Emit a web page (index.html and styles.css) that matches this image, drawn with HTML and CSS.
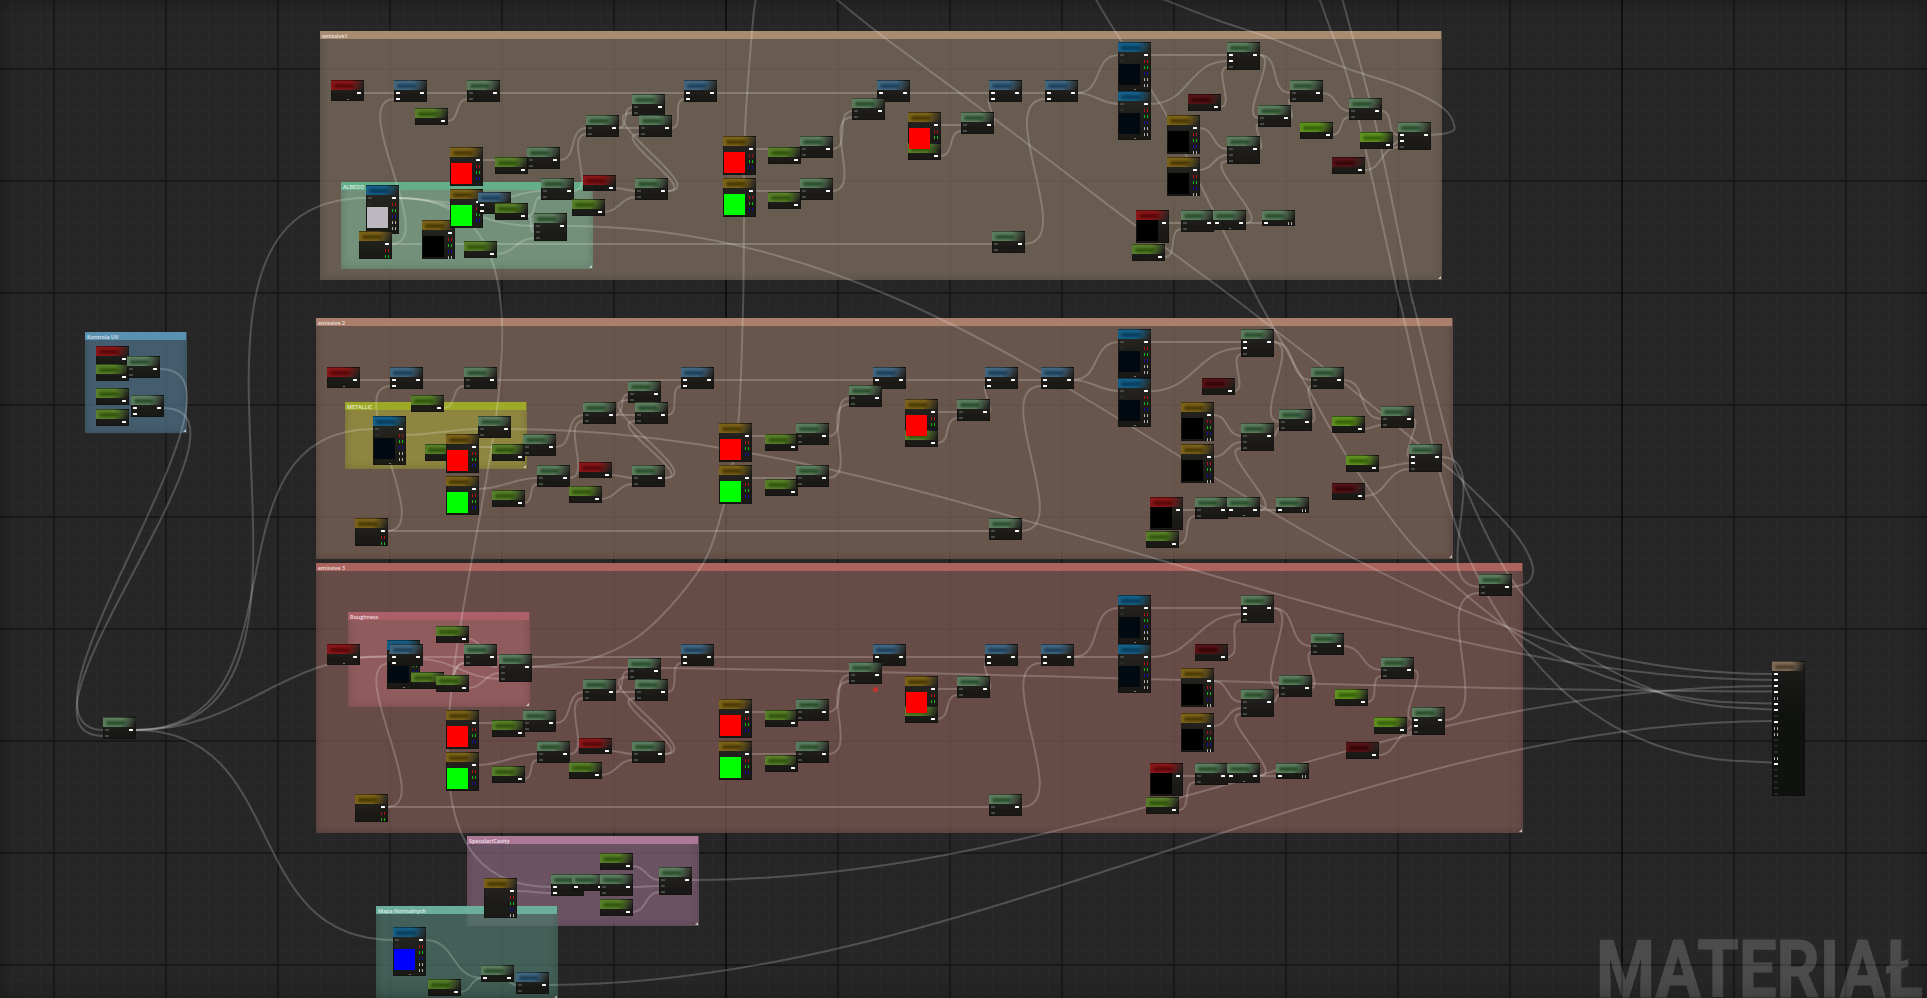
FILE: index.html
```html
<!DOCTYPE html>
<html lang="pl">
<head>
<meta charset="utf-8">
<title>Material graph</title>
<link rel="stylesheet" href="styles.css">
</head>
<body>
<main class="graph" id="graph">
  <section class="comment emissive1"><h2>emissive1</h2></section>
  <section class="comment emissive2"><h2>emissive 2</h2></section>
  <section class="comment emissive3"><h2>emissive 3</h2></section>
  <section class="comment albedo"><h2>ALBEDO</h2></section>
  <section class="comment metallic"><h2>METALLIC</h2></section>
  <section class="comment roughness"><h2>Roughness</h2></section>
  <section class="comment uv"><h2>Kontrola UV</h2></section>
  <section class="comment specular"><h2>Specular/Cavity</h2></section>
  <section class="comment normals"><h2>Mapa Normalnych</h2></section>
  <svg class="wires" id="wires" viewBox="0 0 1927 998"></svg>
  <div class="nodes" id="nodes"></div>
  <i class="marker"></i>
  <svg class="watermark" viewBox="0 0 1927 998"><text x="1596" y="996.5" textLength="327" lengthAdjust="spacingAndGlyphs">MATERIAŁ</text></svg>
</main>
<script src="graph.js"></script>
</body>
</html>
```
FILE: styles.css
```css
* { box-sizing: border-box; }
body { margin: 0; overflow: hidden; background: #262626; font-family: "Open Sans", "Noto Sans", sans-serif; }

.graph {
  position: relative;
  width: 1927px;
  height: 998px;
  overflow: hidden;
  background-color: #262626;
  background-image:
    linear-gradient(90deg, #101010 2px, transparent 2px),
    linear-gradient(90deg, #191919 2px, transparent 2px),
    linear-gradient(#191919 2px, transparent 2px),
    linear-gradient(90deg, #2a2a2a 1px, transparent 1px),
    linear-gradient(#2a2a2a 1px, transparent 1px);
  background-size: 896px 896px, 112px 112px, 112px 112px, 14px 14px, 14px 14px;
  background-position: 725px 0, 53px 0, 0 68px, 54px 0, 0 69px;
  background-repeat: repeat;
}
.graph::after {
  content: "";
  position: absolute;
  inset: 0;
  box-shadow: inset 0 0 22px rgba(0, 0, 0, .3);
  pointer-events: none;
}

.comment {
  position: absolute;
  background: var(--body);
  box-shadow: inset 0 0 9px rgba(0, 0, 0, .2);
}
.comment h2 {
  margin: 0 1px 0 0;
  height: 8px;
  padding-left: 2px;
  background: var(--head);
  color: rgba(255, 255, 255, .8);
  font-size: 5.4px;
  font-weight: 600;
  line-height: 10px;
  white-space: nowrap;
}
.comment::after {
  content: "";
  position: absolute;
  right: 1px;
  bottom: 1px;
  border-left: 3px solid transparent;
  border-bottom: 3px solid rgba(255, 255, 255, .65);
}
.emissive1 { left: 320px; top: 31px; width: 1122px; height: 249px; --head: #a88b71; --body: rgba(132, 115, 98, .7); }
.emissive2 { left: 316px; top: 318px; width: 1137px; height: 241px; --head: #aa806c; --body: rgba(132, 105, 92, .7); }
.emissive3 { left: 316px; top: 563px; width: 1207px; height: 270px; --head: #aa635d; --body: rgba(131, 91, 85, .7); }
.albedo { left: 341px; top: 182px; width: 252px; height: 87px; --head: #65ae8b; --body: rgba(120, 166, 140, .7); }
.metallic { left: 345px; top: 402px; width: 182px; height: 67px; --head: #9da927; --body: rgba(157, 154, 60, .7); }
.roughness { left: 348px; top: 612px; width: 182px; height: 95px; --head: #ad5f68; --body: rgba(163, 98, 103, .7); }
.uv { left: 85px; top: 332px; width: 102px; height: 101px; --head: #5a90b0; --body: rgba(81, 117, 141, .7); }
.specular { left: 467px; top: 836px; width: 232px; height: 90px; --head: #ae7898; --body: rgba(137, 101, 124, .7); }
.normals { left: 376px; top: 906px; width: 182px; height: 93px; --head: #6aae9b; --body: rgba(79, 121, 108, .7); }

.wires, .watermark { position: absolute; inset: 0; width: 100%; height: 100%; }
.wires path { fill: none; stroke: rgba(255, 255, 255, .2); stroke-width: 2; }
.watermark { opacity: .17; }
.watermark text { fill: #fff; stroke: #fff; stroke-width: 1px; font: 700 79px Roboto, "Open Sans", sans-serif; }

.node {
  position: absolute;
  width: 33px;
  background: linear-gradient(rgba(38, 38, 34, .97), rgba(24, 23, 20, .97) 75%);
  box-shadow: inset 0 0 0 1px rgba(10, 10, 10, .35);
}
.node header {
  position: relative;
  height: 10px;
  border-top: 1px solid rgba(0, 0, 0, .4);
  background: linear-gradient(112deg, var(--tone) 55%, transparent 95%);
}
.node header::after {
  content: "";
  position: absolute;
  left: 3px;
  top: 3px;
  width: 20px;
  height: 4px;
  border-radius: 2px;
  background: var(--ink);
  filter: blur(1.3px);
}
.math { --tone: #5c7d5e; --ink: #2b4f2e; }
.fn { --tone: #41667f; --ink: #1e415c; }
.tex { --tone: #165f87; --ink: #0a3e5e; }
.lime { --tone: #587e2a; --ink: #31560c; }
.bright { --tone: #5f9120; --ink: #376308; }
.gold { --tone: #7c6219; --ink: #4b3a04; }
.red { --tone: #891618; --ink: #5a0809; }
.maroon { --tone: #551316; --ink: #360607; }
.output { --tone: #806b56; --ink: #4e4030; background: linear-gradient(#1d1d1b, #10120f 40%); }

.ports { display: flex; justify-content: space-between; padding: 0 3px 0 2px; }
.ports ul { margin: 0; padding: 0; list-style: none; }
.ports li { display: flex; align-items: center; width: 4px; height: 6px; }
.ports li::before { content: ""; box-sizing: border-box; width: 4px; height: 2px; border-radius: .5px; background: currentColor; }
.ports .w { color: #fff; }
.ports .d { color: #484b45; }
.ports .x { color: #292b27; }
.ports .h::before, .ports .r::before, .ports .g::before, .ports .b::before {
  height: 3px;
  background: none;
  border: solid currentColor;
  border-width: 0 1px;
}
.ports .h { color: #b5b5b5; }
.ports .r { color: #b81414; }
.ports .g { color: #14bd1c; }
.ports .b { color: #1010a8; }
.preview { position: absolute; left: 1px; width: 21px; height: 21px; }
.dot { position: absolute; left: 16px; bottom: 1px; width: 2px; height: 1px; background: #777; }
.marker { position: absolute; left: 873px; top: 687px; width: 5px; height: 5px; border-radius: 50%; background: #c9302e; filter: blur(.6px); }
```
FILE: graph.js
```js
// type: [style, height, inputs, outputs, preview offset, bottom dot]
const TYPES = {
  R: ['red', 21, '', 'w', 0, 1],
  rs: ['red', 16, '', 'w'],
  rd: ['maroon', 17, '', 'w'],
  rp: ['red', 33, '', 'w', 10],
  b: ['fn', 22, 'ww', 'w'],
  bd: ['fn', 22, 'dd', 'w'],
  m: ['math', 22, 'dd', 'w'],
  mw: ['math', 22, 'ww', 'w'],
  l: ['math', 28, 'ddd', 'w'],
  lw: ['math', 28, 'wwd', 'w'],
  g: ['lime', 17, '', 'w'],
  gb: ['bright', 17, '', 'w'],
  c: ['gold', 39, '', 'wrgb', 16],
  ck: ['gold', 39, '', 'wrgbh', 16],
  y: ['gold', 28, '', 'wrg'],
  y5: ['gold', 40, '', 'wrgbh'],
  t: ['tex', 49, 'dx', 'wrgbhh', 22, 1],
  s: ['math', 20, 'w', 'w', 0, 1],
  sn: ['math', 17, 'w', 'w'],
  s2: ['math', 16, 'w', 'h'],
  out: ['output', 135, 'wwwwhwwxwhhxxxhwxxxxx', '']
};
const DARK = '#020a11', RED = '#f00', GREEN = '#0f0', BLACK = '#000';

// Left and middle part, repeated in every emissive block.
const CHAIN = {
  R: ['R', 331, 80], b1: ['b', 394, 80], a1: ['m', 467, 80], p1: ['g', 415, 108],
  p2: ['g', 495, 157], a2: ['m', 527, 147], c1: ['c', 450, 147, RED], c2: ['c', 450, 189, GREEN],
  a3: ['m', 586, 115], a4: ['m', 632, 94], a5: ['m', 639, 115], b2: ['b', 684, 80],
  a6: ['m', 541, 178], r1: ['rs', 583, 175], a7: ['m', 635, 178], p3: ['g', 572, 199],
  p4: ['g', 495, 203], y: ['y', 359, 231],
  c3: ['c', 723, 136, RED], c4: ['c', 723, 178, GREEN], p5: ['g', 768, 147], a8: ['m', 800, 136],
  p6: ['g', 768, 192], a9: ['m', 800, 178], b3: ['b', 877, 80], a10: ['m', 852, 98],
  c5: ['c', 908, 112, RED], p7: ['g', 908, 143], a11: ['m', 961, 112],
  b4: ['b', 989, 80], b5: ['b', 1045, 80], a12: ['m', 992, 231]
};
// nodes one pixel further right in the second and third block
const NUDGED = ['a1', 'p2', 'p4', 'a3', 'a7', 'p3', 'b2', 'p5', 'p6', 'a10', 'c5', 'p7', 'a12'];
const TAIL_KEYS = ['t1', 't2', 'l1', 'd1', 'k1', 'k2', 'l2', 'm1', 'm2', 'g1', 'm3', 'g2', 'l3', 'd2', 'rp', 'g3', 'm4', 's1', 's2'];
const TAIL_TYPES = ['t', 't', 'lw', 'rd', 'ck', 'ck', 'l', 'm', 'm', 'gb', 'm', 'gb', 'lw', 'rd', 'rp', 'g', 'm', 's', 's2'];
const TAILS = [
  [[1118, 42], [1118, 91], [1227, 42], [1188, 94], [1167, 115], [1167, 157], [1227, 136], [1258, 105], [1290, 80], [1300, 122], [1349, 98], [1360, 132], [1398, 122], [1332, 157], [1136, 210], [1132, 244], [1181, 210], [1213, 210], [1262, 210]],
  [[1118, 329], [1118, 378], [1241, 329], [1202, 378], [1181, 402], [1181, 444], [1241, 423], [1279, 409], [1311, 367], [1332, 416], [1381, 406], [1346, 455], [1409, 444], [1332, 483], [1150, 497], [1146, 531], [1195, 497], [1227, 497], [1276, 497]],
  [[1118, 595], [1118, 644], [1241, 595], [1195, 644], [1181, 668], [1181, 713], [1241, 689], [1279, 675], [1311, 633], [1335, 689], [1381, 657], [1374, 717], [1412, 707], [1346, 742], [1150, 763], [1146, 797], [1195, 763], [1227, 763], [1276, 763]]
];
// "source target inputIndex"
const LINKS = `R b1 0,b1 a1 0,a1 b2 0,b2 b3 0,b3 b4 0,b4 b5 0,p1 a1 1,y b1 1,y a12 0,a12 b5 1,
c1 a2 0,p2 a2 1,a2 a3 0,a6 a3 1,c2 a6 0,p4 a6 1,a3 a5 0,a3 a4 0,a7 a5 1,a7 a4 1,a5 b2 1,r1 a7 0,p3 a7 1,
c3 a8 0,c4 a9 0,a8 a10 0,a9 a10 1,c5 a11 0,p7 a11 1,a11 b4 1,b5 t1 0,b5 t2 0,
t1 l1 0,t2 l1 1,d1 l1 2,k1 l2 0,k2 l2 1,l2 m1 1,l1 m1 0,l1 m2 0,m1 m2 1,m2 m3 0,g1 m3 1,m3 l3 0,g2 l3 1,d2 l3 2,
s1 l2 2,s1 s2 0,rp m4 0,g3 m4 1`.split(',').map(s => s.trim().split(' '));

const nodesEl = document.getElementById('nodes');
const wiresEl = document.getElementById('wires');

const list = codes => '<ul>' + [...codes].map(c => `<li class="${c}"></li>`).join('') + '</ul>';
function node(type, x, y, color) {
  const [style, h, ins, outs, pv, dot] = TYPES[type];
  const el = document.createElement('article');
  el.className = 'node ' + style;
  el.style.cssText = `left:${x}px;top:${y}px;height:${h}px`;
  el.innerHTML = `<header></header><div class="ports">${list(ins)}${list(outs)}</div>` +
    (pv ? `<i class="preview" style="top:${pv}px;background:${color || BLACK}"></i>` : '') +
    (dot ? '<i class="dot"></i>' : '');
  nodesEl.append(el);
}
function path(d) {
  const p = document.createElementNS('http://www.w3.org/2000/svg', 'path');
  p.setAttribute('d', d);
  wiresEl.append(p);
}
// Spline with horizontal tangents, longer when the target is behind the source.
function wire(x1, y1, x2, y2) {
  const dx = Math.abs(x2 - x1), dy = Math.abs(y2 - y1);
  const k = x2 >= x1
    ? (Math.min(dx, 1000) + Math.min(dy, 1000)) / 3
    : (Math.min(dx, 200) * 3 + Math.min(dy, 200) * 1.5) / 3 * .72 - (dy < 100 ? 6 : 0);
  path(`M${x1} ${y1}C${x1 + k} ${y1} ${x2 - k} ${y2} ${x2} ${y2}`);
}
// Smooth curve through a list of points.
function through(...p) {
  let d = `M${p[0]}`;
  for (let i = 0; i < p.length - 1; i++) {
    const a = p[i - 1] || p[i], b = p[i], c = p[i + 1], e = p[i + 2] || c;
    d += `C${b[0] + (c[0] - a[0]) / 6} ${b[1] + (c[1] - a[1]) / 6} ${c[0] - (e[0] - b[0]) / 6} ${c[1] - (e[1] - b[1]) / 6} ${c[0]} ${c[1]}`;
  }
  path(d);
}

// Nodes lying under the emissive chains
node('t', 366, 185, '#bdb7c0');
node('ck', 422, 220);
node('l', 534, 213);
node('g', 464, 241);
node('t', 373, 416, DARK);
node('g', 425, 444);
node('m', 478, 416);
node('t', 387, 640, DARK);
node('g', 436, 626);
node('l', 499, 654);

[[0, 0], [-4, 287], [-4, 563]].forEach(([ox, oy], i) => {
  const all = {};
  for (const k in CHAIN) {
    const [t, x, y, c] = CHAIN[k];
    all[k] = [t, x + ox + (i && NUDGED.includes(k) ? 1 : 0), y + oy + (i === 2 && y < 120 ? 1 : 0), c];
  }
  TAIL_KEYS.forEach((k, j) => {
    all[k] = [TAIL_TYPES[j], ...TAILS[i][j], TAIL_TYPES[j] === 't' ? DARK : BLACK];
  });
  Object.values(all).forEach(n => node(...n));
  // swatch stays above the parameter tucked beneath it
  const sw = document.createElement('i');
  sw.className = 'preview';
  sw.style.cssText = `left:${all.c5[1] + 1}px;top:${all.c5[2] + 16}px;background:${RED}`;
  nodesEl.append(sw);
  LINKS.forEach(([a, b, n]) => wire(all[a][1] + 32, all[a][2] + 13, all[b][1] + 1, all[b][2] + 13 + 6 * n));
});

node('b', 478, 192);
node('g', 495, 203);
node('g', 436, 675);
node('m', 1479, 574);
[['R', 96, 346], ['g', 96, 364], ['g', 96, 388], ['g', 96, 409], ['m', 127, 356], ['mw', 131, 395],
 ['m', 103, 717], ['y5', 484, 878], ['mw', 551, 874], ['sn', 572, 874], ['m', 600, 874], ['g', 600, 853],
 ['g', 600, 899], ['l', 659, 867], ['t', 393, 927, '#00f'], ['g', 428, 979], ['sn', 481, 965],
 ['bd', 516, 972], ['out', 1772, 661]].forEach(n => node(...n));

[[160, 369, 104, 730], [163, 408, 104, 736],
 [135, 730, 367, 198], [135, 730, 374, 429], [135, 730, 388, 656], [135, 730, 394, 940],
 [398, 198, 552, 887], [398, 198, 479, 205], [398, 198, 535, 226], [527, 216, 535, 232], [496, 254, 535, 238],
 [566, 226, 1773, 674], [510, 429, 1773, 680], [691, 880, 1773, 686], [531, 667, 1773, 691.5], [548, 985, 1773, 721],
 [405, 435, 479, 429], [419, 659, 500, 679], [468, 688, 500, 673], [468, 639, 497, 667], [443, 685, 465, 663],
 [1441, 457, 1480, 587], [1444, 720, 1480, 593],
 [516, 891, 552, 893], [632, 866, 660, 880], [632, 887, 660, 886], [632, 912, 660, 892],
 [425, 940, 482, 978], [460, 992, 482, 978], [500, 978, 517, 985]].forEach(w => wire(...w));

through([531, 667], [587, 660], [633, 640], [669, 608], [705, 560], [723, 508], [733, 462], [739, 415], [743, 310], [744, 220], [745, 130], [753, 20], [757, -5]);
through([830, -6], [862, 20], [893, 44], [980, 108], [1070, 176], [1140, 229], [1223, 290], [1275, 330], [1345, 384], [1420, 445], [1462, 480], [1512, 530], [1529, 556], [1533, 572], [1527, 583], [1511, 587]);
through([1429, 135], [1447, 133], [1454.5, 127], [1443, 108], [1403, 87], [1343, 67], [1270, 38], [1217, 20], [1160, -2]);
through([1095, -2], [1108, 20], [1122, 42], [1153, 93], [1168, 118], [1203, 190], [1253, 290], [1275, 330], [1310, 392], [1345, 453], [1400, 530], [1440, 572], [1508, 628], [1560, 658], [1607, 677], [1653, 691], [1710, 701], [1773, 703.5]);
through([1319, -2], [1327, 20], [1353, 97], [1397, 290], [1402, 310], [1432, 443], [1453, 517], [1475, 571], [1508, 628], [1560, 688], [1602, 719], [1625, 732], [1665, 748], [1715, 759], [1773, 762.5]);
through([1342, -2], [1348, 20], [1377, 130], [1410, 290], [1415, 310], [1451, 452], [1462, 480], [1488, 537], [1517, 587], [1573, 647], [1653, 690], [1710, 705], [1773, 709.5]);
```
